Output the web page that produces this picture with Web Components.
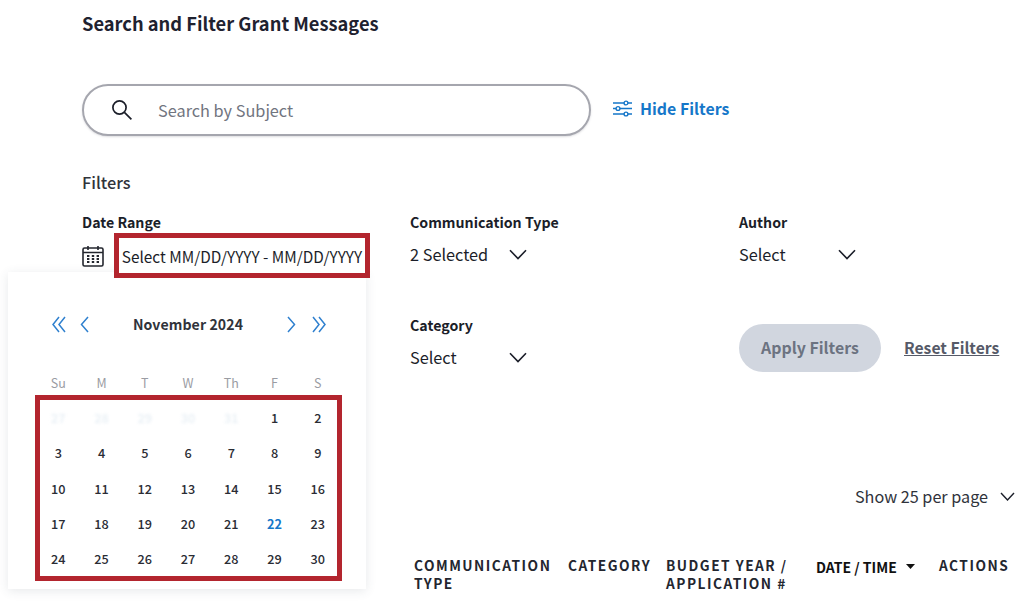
<!DOCTYPE html>
<html>
<head>
<meta charset="utf-8">
<style>
  html, body { margin: 0; background: #fff; }
  body { font-family: "Noto Sans CJK SC", "Source Sans Pro", "Noto Sans", sans-serif; color: #1b1e29; width: 1024px; height: 601px; overflow: hidden; }
</style>
</head>
<body>
<grant-search></grant-search>

<template id="select-tpl">
  <style>
    :host { display: block; line-height: 20px; }
    .label { font-size: 14.2px; font-weight: 700; height: 20px; }
    .row { display: flex; align-items: center; margin-top: 11px; height: 22px; font-size: 16.3px; }
    .value { width: var(--value-width, 99px); }
    svg { width: 18px; height: 11px; fill: none; stroke: #1b1e29; stroke-width: 1.6; }
  </style>
  <div class="label"><slot name="label"></slot></div>
  <div class="row">
    <span class="value"><slot></slot></span>
    <svg viewBox="0 0 18 11"><path d="M1 1.2 9 9.6 17 1.2"/></svg>
  </div>
</template>

<script>
  (function grantSearch(customElements) {
    'use strict';

    function fromTemplate(el, id) {
      const shadowRoot = el.attachShadow({ mode: 'open' });
      shadowRoot.appendChild(document.getElementById(id).content.cloneNode(true));
    }

    class FilterSelect extends HTMLElement {
      constructor() {
        super();
        fromTemplate(this, 'select-tpl');
      }
    }

    class SearchBar extends HTMLElement {
      constructor() {
        super();
        const shadowRoot = this.attachShadow({ mode: 'open' });
        shadowRoot.innerHTML = `
          <style>
            :host { display: flex; align-items: center; gap: 22px; }
            .box {
              box-sizing: border-box;
              width: 509px;
              height: 52px;
              border: 2px solid #a5a6ae;
              border-radius: 26px;
              display: flex;
              align-items: center;
              padding-left: 27px;
              box-shadow: 0 1px 2px rgba(120, 120, 130, .25);
            }
            .box svg { width: 22px; height: 22px; fill: none; stroke: #1b1e29; stroke-width: 1.7; }
            .placeholder { margin-left: 25px; font-size: 16.3px; color: #71757f; line-height: 22px; }
            .toggle { display: flex; align-items: center; gap: 8px; color: #1677c9; font-size: 15.9px; font-weight: 700; line-height: 22px; margin-top: -3px; }
            .toggle svg { width: 19px; height: 17px; fill: none; stroke: #1677c9; stroke-width: 1.4; }
          </style>
          <div class="box">
            <svg viewBox="0 0 22 22"><circle cx="8.5" cy="8.5" r="6.6"/><path d="M13.4 13.4 20.4 20.4"/></svg>
            <span class="placeholder">Search by Subject</span>
          </div>
          <div class="toggle">
            <svg viewBox="0 0 19 17">
              <path d="M0 3h11M15 3h4M0 8.5h3M7 8.5h12M0 14h11M15 14h4"/>
              <circle cx="13" cy="3" r="1.9"/><circle cx="5" cy="8.5" r="1.9"/><circle cx="13" cy="14" r="1.9"/>
            </svg>
            <span>Hide Filters</span>
          </div>
        `;
      }
    }

    class DateRange extends HTMLElement {
      constructor() {
        super();
        const shadowRoot = this.attachShadow({ mode: 'open' });
        shadowRoot.innerHTML = `
          <style>
            :host { display: block; position: relative; z-index: 2; }
            .label { font-size: 14.2px; font-weight: 700; line-height: 20px; height: 20px; }
            .row { display: flex; align-items: center; gap: 11px; margin-top: 1px; }
            svg { width: 22px; height: 22px; fill: none; stroke: #23262e; stroke-width: 1.6; flex: none; margin-top: 1px; margin-right: -1px; }
            .input {
              box-sizing: border-box;
              width: 256px;
              height: 45px;
              border: 5px solid #b3252e;
              background: #fff;
              display: flex;
              align-items: center;
              justify-content: center;
              white-space: nowrap;
              font-size: 15.35px;
              line-height: 22px;
              color: #1b1e29;
            }
          </style>
          <div class="label">Date Range</div>
          <div class="row">
            <svg viewBox="0 0 22 22">
              <rect x="1" y="3" width="20" height="18" rx="1.5"/>
              <path d="M1 7.5h20M6 1v4M16 1v4"/>
              <path stroke-width="2" d="M5 11h2.4M9.8 11h2.4M14.6 11h2.4M5 14h2.4M9.8 14h2.4M14.6 14h2.4M5 17h2.4M9.8 17h2.4M14.6 17h2.4"/>
            </svg>
            <div class="input">Select MM/DD/YYYY - MM/DD/YYYY</div>
          </div>
        `;
      }
    }

    class CalendarPopup extends HTMLElement {
      constructor() {
        super();
        const shadowRoot = this.attachShadow({ mode: 'open' });
        const days = ['Su', 'M', 'T', 'W', 'Th', 'F', 'S'];
        const faded = ['27', '28', '29', '30', '31'];
        let cells = faded.map(d => `<span class="off">${d}</span>`).join('');
        for (let d = 1; d <= 30; d++) {
          cells += `<span class="${d === 22 ? 'today' : ''}">${d}</span>`;
        }
        shadowRoot.innerHTML = `
          <style>
            :host {
              position: absolute;
              left: 8px;
              top: 272px;
              width: 358px;
              height: 317px;
              box-sizing: border-box;
              background: #fff;
              box-shadow: 0 2px 10px rgba(60, 70, 90, .12);
              padding-top: 36px;
              color: #30333b;
            }
            .head { display: flex; align-items: center; height: 32px; padding: 0 40px 0 44px; }
            .head svg { width: 14px; height: 17px; fill: none; stroke: #2f80cf; stroke-width: 1.5; flex: none; }
            .head .inner { margin-left: 14px; width: 9px; }
            .head .next { margin-left: 0; width: 9px; }
            .head .last { margin-left: 16px; }
            .title { flex: 1; text-align: center; font-size: 14.1px; font-weight: 700; line-height: 20px; letter-spacing: .1px; }
            .week, .grid { display: grid; grid-template-columns: repeat(7, 43.25px); justify-content: center; text-align: center; }
            .week { margin-top: 34px; padding-left: 2px; font-size: 12.5px; line-height: 18px; color: #9a9ca3; height: 18px; }
            .frame {
              box-sizing: border-box;
              width: 307px;
              height: 186px;
              margin: 3px 0 0 27px;
              border: 5px solid #b3252e;
            }
            .grid { margin-left: -6px; margin-right: -5px; grid-auto-rows: 35.25px; font-size: 12.7px; line-height: 35px; font-weight: 500; color: #2a2c34; }
            .off { color: #e6eef4; filter: blur(1.4px); }
            .today { color: #1677c9; font-weight: 700; }
          </style>
          <div class="head">
            <svg viewBox="0 0 14 17"><path d="M7 1 1 8.5 7 16M13 1 7 8.5 13 16"/></svg>
            <svg class="inner" viewBox="0 0 9 17"><path d="M8 1 1.5 8.5 8 16"/></svg>
            <span class="title">November 2024</span>
            <svg class="next" viewBox="0 0 9 17"><path d="M1 1 7.5 8.5 1 16"/></svg>
            <svg class="last" viewBox="0 0 14 17"><path d="M1 1 7 8.5 1 16M7 1 13 8.5 7 16"/></svg>
          </div>
          <div class="week">${days.map(d => `<span>${d}</span>`).join('')}</div>
          <div class="frame"><div class="grid">${cells}</div></div>
        `;
      }
    }

    class ResultsHeader extends HTMLElement {
      constructor() {
        super();
        const shadowRoot = this.attachShadow({ mode: 'open' });
        shadowRoot.innerHTML = `
          <style>
            :host { display: block; width: 610px; }
            .per-page { display: flex; justify-content: flex-end; align-items: center; gap: 12px; font-size: 16.2px; line-height: 22px; color: #30333b; height: 22px; padding-right: 9px; }
            .per-page svg { width: 15px; height: 9px; fill: none; stroke: #1b1e29; stroke-width: 1.4; }
            .cols { display: flex; margin-top: 49px; font-size: 13.7px; line-height: 18px; font-weight: 700; letter-spacing: 1.5px; color: #23262f; }
            .cols > div { flex: none; }
            .type { width: 154px; }
            .cat { width: 98px; }
            .year { width: 150px; }
            .date { width: 123px; font-size: 14px; letter-spacing: 0; display: flex; align-items: flex-start; gap: 9px; padding-top: 2px; color: #111; white-space: nowrap; }
            .date svg { width: 9px; height: 5px; fill: #111; margin-top: 6px; }
          </style>
          <div class="per-page">
            <span>Show 25 per page</span>
            <svg viewBox="0 0 15 9"><path d="M1 1 7.5 8 14 1"/></svg>
          </div>
          <div class="cols">
            <div class="type">COMMUNICATION<br>TYPE</div>
            <div class="cat">CATEGORY</div>
            <div class="year">BUDGET YEAR /<br>APPLICATION #</div>
            <div class="date">DATE / TIME <svg viewBox="0 0 9 5"><path d="M0 0h9L4.5 5z"/></svg></div>
            <div>ACTIONS</div>
          </div>
        `;
      }
    }

    class GrantSearch extends HTMLElement {
      constructor() {
        super();
        const shadowRoot = this.attachShadow({ mode: 'open' });
        shadowRoot.innerHTML = `
          <style>
            :host { display: block; position: relative; width: 1024px; height: 601px; overflow: hidden; box-sizing: border-box; padding: 10px 0 0 82px; }
            h1 { margin: 0; font-size: 18.3px; line-height: 27px; font-weight: 700; color: #1f2230; }
            search-bar { margin-top: 47px; }
            .filters-title { margin-top: 35px; font-size: 16.3px; line-height: 22px; font-weight: 500; color: #30333b; }
            .row { display: grid; grid-template-columns: 328px 329px 1fr; margin-top: 19px; }
            .second { margin-top: 37px; }
            .actions { display: flex; align-items: center; gap: 23px; margin-top: 9px; height: 48px; }
            .apply { width: 142px; height: 48px; border-radius: 24px; background: #d1d6df; color: #6c7381; font-size: 15.9px; font-weight: 700; line-height: 48px; text-align: center; }
            .reset { color: #565a68; font-size: 15.7px; font-weight: 700; text-decoration: underline; line-height: 22px; }
            results-header { position: relative; margin: 113px 0 0 332px; }
          </style>
          <h1>Search and Filter Grant Messages</h1>
          <search-bar></search-bar>
          <div class="filters-title">Filters</div>
          <div class="row">
            <date-range></date-range>
            <filter-select><span slot="label">Communication Type</span>2 Selected</filter-select>
            <filter-select><span slot="label">Author</span>Select</filter-select>
          </div>
          <div class="row second">
            <div></div>
            <filter-select><span slot="label">Category</span>Select</filter-select>
            <div class="actions">
              <div class="apply">Apply Filters</div>
              <div class="reset">Reset Filters</div>
            </div>
          </div>
          <results-header></results-header>
          <calendar-popup></calendar-popup>
        `;
      }
    }

    customElements.define('filter-select', FilterSelect);
    customElements.define('search-bar', SearchBar);
    customElements.define('date-range', DateRange);
    customElements.define('calendar-popup', CalendarPopup);
    customElements.define('results-header', ResultsHeader);
    customElements.define('grant-search', GrantSearch);
  })(window.customElements);
</script>
</body>
</html>
